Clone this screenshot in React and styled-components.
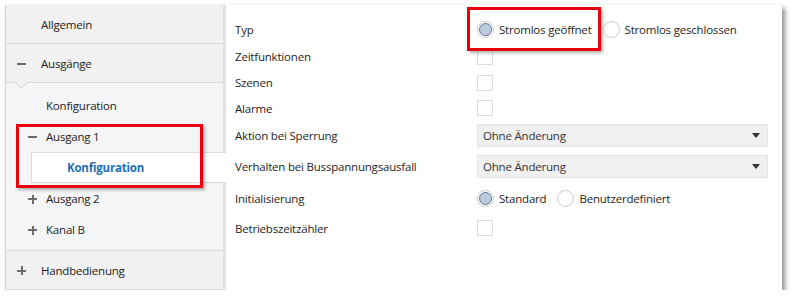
import React from "react";
import styled, { createGlobalStyle } from "styled-components";

const Global = createGlobalStyle`
  html, body {
    margin: 0;
    background: #ffffff;
  }
  body {
    font-family: "Open Sans", "Noto Sans", Arial, sans-serif;
    font-size: 11.5px;
    letter-spacing: -0.2px;
    color: #1e1e1e;
  }
`;

const Window = styled.div`
  margin: 5px 0 0 5px;
  width: 777px;
  height: 285px;
  display: flex;
  border-left: 1px solid #d4d4d4;
  box-sizing: border-box;
  box-shadow: 3px 3px 5px rgba(0, 0, 0, 0.45);
  background: #ffffff;
`;

const Nav = styled.div`
  position: relative;
  width: 217px;
  flex: none;
  display: flex;
  flex-direction: column;
  background: #f4f5f7;
  border-right: 3px solid #e2e2e2;
`;

const Header = styled.div`
  position: relative;
  height: 38px;
  display: flex;
  align-items: center;
  padding-left: 11px;
  background: #f1f1f1;
  border-bottom: 1px solid #d9d9d9;
  color: #222;
`;

const Notch = styled.span`
  position: absolute;
  left: 11px;
  bottom: -5px;
  width: 8px;
  height: 8px;
  background: #f1f1f1;
  border-right: 1px solid #d9d9d9;
  border-bottom: 1px solid #d9d9d9;
  transform: rotate(45deg);
`;

const Toggle = styled.span`
  position: relative;
  width: 9px;
  height: 9px;
  margin-right: ${(p) => p.gap}px;
  flex: none;
  &::before {
    content: "";
    position: absolute;
    left: 0;
    top: 4px;
    width: 9px;
    height: 2px;
    background: #6b6b6b;
  }
  &::after {
    content: "";
    display: ${(p) => (p.open ? "none" : "block")};
    position: absolute;
    left: 3.5px;
    top: 0.5px;
    width: 2px;
    height: 9px;
    background: #6b6b6b;
  }
`;

const Spacer = styled.span`
  width: 24px;
  flex: none;
`;

const SubList = styled.div`
  flex: 1;
  display: flex;
  flex-direction: column;
  padding-top: 7px;
  border-bottom: 1px solid #d9d9d9;
`;

const SubItem = styled.div`
  position: relative;
  height: 31px;
  box-sizing: border-box;
  display: flex;
  align-items: center;
  padding-left: ${(p) => p.indent}px;
  color: #222;
  ${(p) =>
    p.selected &&
    `
    margin-left: 25px;
    margin-right: -3px;
    padding-left: ${p.indent - 25}px;
    background: #ffffff;
    border: 1px solid #dcdcdc;
    border-right: none;
    font-weight: 700;
    color: #1d6fb4;
    z-index: 1;
  `}
`;

const Mark = styled.div`
  position: absolute;
  left: 10px;
  top: 119px;
  width: 187px;
  height: 64px;
  box-sizing: border-box;
  border: 3px solid #e8000e;
  box-shadow: 2px 2px 3px rgba(0, 0, 0, 0.3);
  z-index: 2;
  pointer-events: none;
`;

const Content = styled.div`
  flex: 1;
  padding: 10px 14px 0 9px;
  display: grid;
  grid-template-columns: 242px 1fr;
  align-content: start;
`;

const Label = styled.div`
  height: ${(p) => p.h}px;
  display: flex;
  align-items: center;
  color: #1e1e1e;
`;

const Field = styled.div`
  height: ${(p) => p.h}px;
  display: flex;
  align-items: center;
`;

const Check = styled.span`
  width: 16px;
  height: 16px;
  box-sizing: border-box;
  border: 1px solid #dcdcdc;
  background: #ffffff;
`;

const Options = styled.div`
  display: flex;
  align-items: center;
  gap: 11px;
`;

const Option = styled.label`
  position: relative;
  display: flex;
  align-items: center;
  gap: 5px;
  color: #1e1e1e;
  ${(p) =>
    p.marked &&
    `
    &::after {
      content: "";
      position: absolute;
      left: -10px;
      right: -9px;
      top: -14px;
      bottom: -13px;
      border: 3px solid #e8000e;
      box-shadow: 2px 2px 3px rgba(0, 0, 0, 0.3);
      pointer-events: none;
    }
  `}
`;

const Radio = styled.span`
  width: 17px;
  height: 17px;
  box-sizing: border-box;
  border-radius: 50%;
  border: 1px solid #c9c9c9;
  background: #ffffff;
  display: flex;
  align-items: center;
  justify-content: center;
  flex: none;
  &::after {
    content: "";
    display: ${(p) => (p.checked ? "block" : "none")};
    width: 13px;
    height: 13px;
    box-sizing: border-box;
    border-radius: 50%;
    border: 1px solid #5f7491;
    background: #bccbdd;
  }
`;

const Select = styled.div`
  width: 100%;
  height: 23px;
  box-sizing: border-box;
  display: flex;
  align-items: center;
  justify-content: space-between;
  padding: 0 7px 0 5px;
  background: #f0f0f0;
  border: 1px solid #e4e4e4;
  color: #333;
`;

const Caret = styled.span`
  width: 0;
  height: 0;
  border-left: 4.5px solid transparent;
  border-right: 4.5px solid transparent;
  border-top: 5px solid #333;
`;

const rows = [
  { label: "Typ", h: 28, kind: "radio", options: ["Stromlos geöffnet", "Stromlos geschlossen"], marked: true },
  { label: "Zeitfunktionen", h: 27, kind: "check" },
  { label: "Szenen", h: 25, kind: "check" },
  { label: "Alarme", h: 26, kind: "check" },
  { label: "Aktion bei Sperrung", h: 29, kind: "select", value: "Ohne Änderung" },
  { label: "Verhalten bei Busspannungsausfall", h: 32, kind: "select", value: "Ohne Änderung" },
  { label: "Initialisierung", h: 32, kind: "radio", options: ["Standard", "Benutzerdefiniert"] },
  { label: "Betriebszeitzähler", h: 28, kind: "check" },
];

const renderField = (row) => {
  if (row.kind === "check") return <Check />;
  if (row.kind === "select")
    return (
      <Select>
        <span>{row.value}</span>
        <Caret />
      </Select>
    );
  return (
    <Options>
      {row.options.map((o, i) => (
        <Option key={o} marked={row.marked && i === 0}>
          <Radio checked={i === 0} />
          {o}
        </Option>
      ))}
    </Options>
  );
};

const App = () => {
  return (
    <>
      <Global />
      <Window>
        <Nav>
          <Header>
            <Spacer />
            Allgemein
          </Header>
          <Header>
            <Toggle open gap={15} />
            Ausgänge
            <Notch />
          </Header>
          <SubList>
            <SubItem indent={40}>Konfiguration</SubItem>
            <SubItem indent={22}>
              <Toggle open gap={9} />
              Ausgang 1
            </SubItem>
            <SubItem indent={60} selected>
              Konfiguration
            </SubItem>
            <SubItem indent={22}>
              <Toggle gap={9} />
              Ausgang 2
            </SubItem>
            <SubItem indent={22}>
              <Toggle gap={9} />
              Kanal B
            </SubItem>
          </SubList>
          <Header>
            <Toggle gap={15} />
            Handbedienung
          </Header>
          <Mark />
        </Nav>
        <Content>
          {rows.map((r) => (
            <React.Fragment key={r.label}>
              <Label h={r.h}>{r.label}</Label>
              <Field h={r.h}>{renderField(r)}</Field>
            </React.Fragment>
          ))}
        </Content>
      </Window>
    </>
  );
};

export default App;
